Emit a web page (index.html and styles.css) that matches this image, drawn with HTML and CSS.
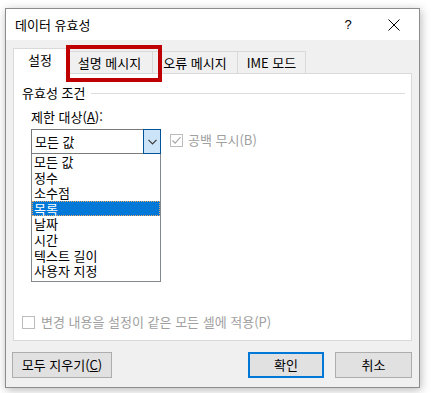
FILE: index.html
```html
<!DOCTYPE html>
<html lang="ko">
<head>
<meta charset="utf-8">
<title>데이터 유효성</title>
<link rel="stylesheet" href="styles.css">
</head>
<body>
<div class="dialog">
  <div class="titlebar">
    <span class="title">데이터 유효성</span>
    <span class="tbtn help">?</span>
    <span class="tbtn close">
      <svg width="12" height="12" viewBox="0 0 12 12"><path d="M0.5 0.5 L11.5 11.5 M11.5 0.5 L0.5 11.5" stroke="#000" stroke-width="1" fill="none"/></svg>
    </span>
  </div>
  <div class="body">
    <div class="tabs">
      <div class="tab active t1">설정</div>
      <div class="tab t2">설명 메시지</div>
      <div class="tab t3">오류 메시지</div>
      <div class="tab t4">IME 모드</div>
    </div>
    <div class="panel">
      <div class="legend"><span>유효성 조건</span><span class="rule"></span></div>
      <div class="field">
        <div class="label">제한 대상(<u>A</u>):</div>
        <div class="row">
          <div class="combo-col">
            <div class="combo">
              <span class="combo-text">모든 값</span>
              <span class="combo-btn">
                <svg width="9" height="6" viewBox="0 0 9 6"><path d="M0.5 0.8 L4.5 4.8 L8.5 0.8" stroke="#3c3c3c" stroke-width="1.2" fill="none"/></svg>
              </span>
            </div>
            <ul class="list">
              <li>모든 값</li>
              <li>정수</li>
              <li>소수점</li>
              <li class="sel">목록</li>
              <li>날짜</li>
              <li>시간</li>
              <li>텍스트 길이</li>
              <li>사용자 지정</li>
            </ul>
          </div>
          <label class="check top-check">
            <span class="box">
              <svg width="11" height="11" viewBox="0 0 11 11"><path d="M1.5 5.5 L4.2 8.2 L9.5 2.2" stroke="#a8a8a8" stroke-width="1.2" fill="none"/></svg>
            </span>
            <span class="ctext">공백 무시(B)</span>
          </label>
        </div>
      </div>
      <label class="check bottom-check">
        <span class="box"></span>
        <span class="ctext">변경 내용을 설정이 같은 모든 셀에 적용(P)</span>
      </label>
    </div>
    <div class="buttons">
      <span class="btn clear">모두 지우기(<u>C</u>)</span>
      <span class="spacer"></span>
      <span class="btn ok">확인</span>
      <span class="btn cancel">취소</span>
    </div>
  </div>
  <div class="highlight"></div>
</div>
</body>
</html>
```

FILE: styles.css
```css
html, body {
  margin: 0;
  padding: 0;
  background: #ffffff;
}
body {
  font-family: "Noto Sans CJK KR", "Noto Sans", sans-serif;
  font-size: 13px;
  color: #000;
  overflow: hidden;
  height: 393px;
}
.dialog {
  position: relative;
  box-sizing: border-box;
  margin: 8px 0 0 5px;
  width: 415px;
  height: 380px;
  border: 1px solid #8c8c8c;
  background: #f0f0f0;
  box-shadow: 1px 2px 9px rgba(0, 0, 0, 0.28);
  display: flex;
  flex-direction: column;
}
.titlebar {
  height: 31px;
  background: #ffffff;
  display: flex;
  align-items: center;
  padding-left: 9px;
  padding-right: 2px;
}
.title {
  flex: 1;
  font-size: 13px;
  line-height: 16px;
}
.tbtn {
  width: 46px;
  height: 31px;
  display: flex;
  align-items: center;
  justify-content: center;
}
.help {
  font-family: "Liberation Sans", sans-serif;
  font-size: 13px;
}
.body {
  flex: 1;
  display: flex;
  flex-direction: column;
  padding: 8px 7px 9px 6px;
}
.tabs {
  display: flex;
  align-items: flex-end;
  height: 25px;
  padding-left: 1px;
  position: relative;
  z-index: 1;
}
.tab {
  box-sizing: border-box;
  height: 22px;
  border: 1px solid #d9d9d9;
  border-bottom: none;
  border-left: none;
  background: #f0f0f0;
  display: flex;
  align-items: center;
  justify-content: center;
  line-height: 16px;
  padding-top: 1px;
}
.tab.active {
  height: 26px;
  margin-bottom: -1px;
  background: #ffffff;
  border-left: 1px solid #d9d9d9;
  padding-top: 0;
  padding-bottom: 3px;
}
.t1 { width: 54px; }
.t2 { width: 86px; }
.t3 { width: 85px; }
.t4 { width: 68px; }
.panel {
  box-sizing: border-box;
  height: 268px;
  margin-left: 1px;
  width: 399px;
  background: #ffffff;
  border: 1px solid #d9d9d9;
  display: flex;
  flex-direction: column;
  padding: 11px 6px 0 8px;
}
.legend {
  display: flex;
  align-items: center;
  line-height: 16px;
  height: 16px;
}
.rule {
  flex: 1;
  height: 1px;
  background: #dcdcdc;
  margin-left: 6px;
}
.field {
  margin-left: 9px;
  margin-top: 8px;
}
.label {
  line-height: 16px;
  height: 16px;
}
.row {
  display: flex;
  align-items: flex-start;
  margin-top: 4px;
}
.combo-col {
  width: 130px;
  display: flex;
  flex-direction: column;
}
.combo {
  position: relative;
  box-sizing: border-box;
  height: 25px;
  border: 1px solid #7a7a7a;
  display: flex;
  align-items: center;
  padding-left: 3px;
  line-height: 16px;
}
.combo-btn {
  position: absolute;
  top: -1px;
  right: -1px;
  box-sizing: border-box;
  width: 18px;
  height: 25px;
  border: 1px solid #005499;
  background: #cce4f7;
  display: flex;
  align-items: center;
  justify-content: center;
}
.list {
  list-style: none;
  margin: -1px 0 0 0;
  padding: 0 0 1px 0;
  border: 1px solid #828790;
  box-sizing: border-box;
  height: 129px;
}
.list li {
  height: 15.6px;
  line-height: 15.6px;
  padding-left: 2px;
  box-sizing: border-box;
  white-space: nowrap;
}
.list li.sel {
  background: #0078d7;
  color: #ffffff;
  border: 1px dotted #e8a86a;
  padding-left: 1px;
  line-height: 13.6px;
}
.check {
  display: flex;
  align-items: center;
  color: #a0a0a0;
  line-height: 16px;
}
.box {
  box-sizing: border-box;
  width: 13px;
  height: 13px;
  border: 1px solid #bcbcbc;
  background: #ffffff;
  display: flex;
  align-items: center;
  justify-content: center;
}
.ctext {
  margin-left: 5px;
}
.top-check {
  margin-left: 9px;
  margin-top: 3px;
}
.bottom-check {
  margin-top: auto;
  margin-bottom: 10px;
}
.bottom-check .ctext {
  margin-left: 6px;
}
.buttons {
  display: flex;
  margin-top: 11px;
  height: 26px;
}
.spacer {
  flex: 1;
}
.btn {
  box-sizing: border-box;
  height: 26px;
  border: 1px solid #adadad;
  background: #e1e1e1;
  display: flex;
  align-items: center;
  justify-content: center;
  line-height: 16px;
}
.clear {
  width: 100px;
}
.ok {
  width: 76px;
  border: 2px solid #0078d7;
  margin-right: 11px;
}
.cancel {
  width: 77px;
}
.highlight {
  position: absolute;
  left: 60px;
  top: 36px;
  width: 96px;
  height: 37px;
  box-sizing: border-box;
  border: 4px solid #c00000;
  z-index: 5;
}
```
